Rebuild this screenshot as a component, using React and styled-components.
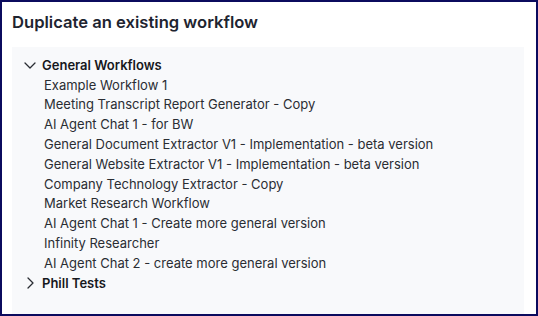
import styled, { createGlobalStyle } from "styled-components";

const GlobalStyle = createGlobalStyle`
  * { box-sizing: border-box; }
  body {
    margin: 0;
    background: #ffffff;
    font-family: Inter, "Noto Sans", sans-serif;
  }
`;

const Frame = styled.div`
  width: 538px;
  height: 316px;
  border: 2px solid #0b0b5e;
  overflow: hidden;
  padding: 0 12px 0 10px;
  display: flex;
  flex-direction: column;
  background: #ffffff;
`;

const Title = styled.h2`
  margin: 0;
  height: 45px;
  display: flex;
  align-items: center;
  padding-bottom: 5px;
  font-size: 16.6px;
  font-weight: 600;
  color: #1e2430;
`;

const Panel = styled.div`
  flex: 1;
  background: #f8f9fb;
  padding: 8px 12px 0 12px;
`;

const Group = styled.div`
  display: flex;
  flex-direction: column;
`;

const GroupHeader = styled.div`
  display: flex;
  align-items: center;
  height: 19.8px;
  gap: 6px;
  font-size: 13px;
  font-weight: 600;
  color: #16181d;
  cursor: pointer;
`;

const Chevron = styled.svg`
  width: 12px;
  height: 12px;
  flex: none;
`;

const Item = styled.div`
  height: 19.8px;
  display: flex;
  align-items: center;
  padding-left: 20px;
  font-size: 13px;
  color: #2a2d33;
  white-space: nowrap;
`;

const groups = [
  {
    name: "General Workflows",
    open: true,
    items: [
      "Example Workflow 1",
      "Meeting Transcript Report Generator - Copy",
      "AI Agent Chat 1 - for BW",
      "General Document Extractor V1 - Implementation - beta version",
      "General Website Extractor V1 - Implementation - beta version",
      "Company Technology Extractor - Copy",
      "Market Research Workflow",
      "AI Agent Chat 1 - Create more general version",
      "Infinity Researcher",
      "AI Agent Chat 2 - create more general version",
    ],
  },
  { name: "Phill Tests", open: false, items: [] },
];

function Arrow({ open }) {
  return (
    <Chevron viewBox="0 0 12 12" fill="none" stroke="#2a2d33" strokeWidth="1.3" strokeLinecap="round" strokeLinejoin="round">
      {open ? <path d="M1 4l5 5 5-5" /> : <path d="M4 1l5 5-5 5" />}
    </Chevron>
  );
}

export default function App() {
  return (
    <>
      <GlobalStyle />
      <Frame>
        <Title>Duplicate an existing workflow</Title>
        <Panel>
          {groups.map((g) => (
            <Group key={g.name}>
              <GroupHeader>
                <Arrow open={g.open} />
                {g.name}
              </GroupHeader>
              {g.open && g.items.map((it) => <Item key={it}>{it}</Item>)}
            </Group>
          ))}
        </Panel>
      </Frame>
    </>
  );
}
